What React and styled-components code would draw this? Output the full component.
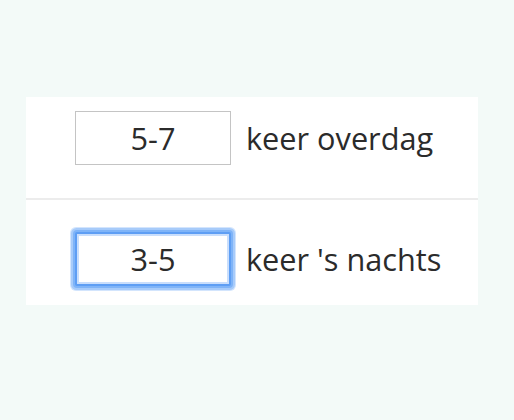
import React from "react";
import styled, { createGlobalStyle, css } from "styled-components";

const Global = createGlobalStyle`
  html, body {
    margin: 0;
    padding: 0;
    background: #f3faf8;
  }
  body {
    font-family: "Open Sans", "Noto Sans", sans-serif;
  }
`;

const Page = styled.div`
  padding: 97px 0 0 26px;
`;

const Panel = styled.div`
  width: 452px;
  background: #ffffff;
  display: flex;
  flex-direction: column;
`;

const Row = styled.div`
  display: flex;
  align-items: center;
  gap: 15px;
  padding: ${(p) => p.$top}px 0 ${(p) => p.$bottom}px 49px;
  border-top: ${(p) => (p.$divider ? "2px solid #ececec" : "none")};
`;

const focusRing = css`
  border: 2px solid #5e9ef4;
  border-radius: 2px;
  box-shadow: inset 0 0 0 2px #c9defc, 0 0 0 2px #7fb4f8, 0 0 0 4px #a7cbfa,
    0 0 0 5px #d3e5fd;
`;

const Field = styled.input`
  box-sizing: border-box;
  width: 156px;
  height: 54px;
  margin: 0;
  padding: 0;
  border: 1px solid #c4c4c4;
  border-radius: 0;
  background: #ffffff;
  font-family: "Open Sans", "Noto Sans", sans-serif;
  font-size: 30.7px;
  color: #2b2b2b;
  text-align: center;
  outline: none;
  ${(p) => p.$focused && focusRing}
`;

const Label = styled.span`
  font-size: 30.7px;
  color: #2b2b2b;
  white-space: nowrap;
`;

export default function App() {
  return (
    <>
      <Global />
      <Page>
        <Panel>
          <Row $top={14} $bottom={33}>
            <Field defaultValue="5-7" readOnly />
            <Label>keer overdag</Label>
          </Row>
          <Row $top={32} $bottom={19} $divider>
            <Field defaultValue="3-5" readOnly $focused />
            <Label>keer 's nachts</Label>
          </Row>
        </Panel>
      </Page>
    </>
  );
}
